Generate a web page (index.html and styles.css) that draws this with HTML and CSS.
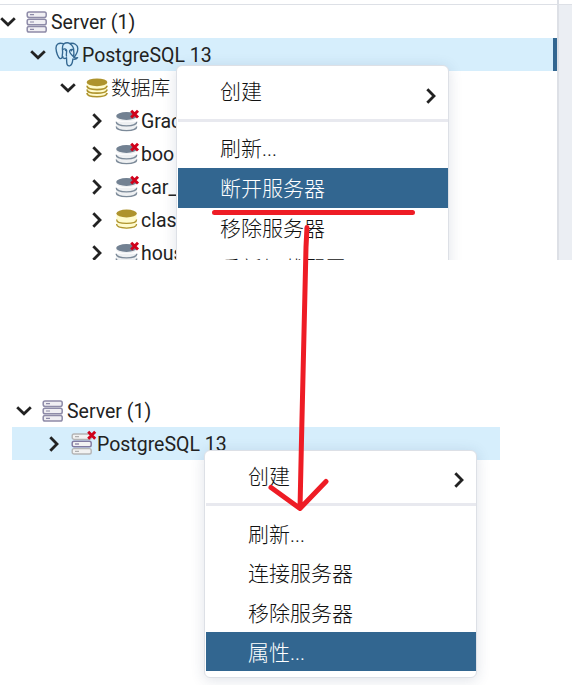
FILE: index.html
```html
<!DOCTYPE html>
<html lang="zh-CN">
<head>
<meta charset="utf-8">
<title>Server</title>
<link rel="stylesheet" href="styles.css">
</head>
<body>
<svg class="defs" width="0" height="0">
  <defs>
    <symbol id="down" viewBox="0 0 16 10"><path d="M1.2 1.3 8 7.8 14.8 1.3" fill="none" stroke="#222" stroke-width="2.8"/></symbol>
    <symbol id="right" viewBox="0 0 10 16"><path d="M1.3 1.2 8 8 1.3 14.8" fill="none" stroke="#222" stroke-width="2.8"/></symbol>
    <symbol id="servers" viewBox="0 0 22 22">
      <g fill="#f0eff3" stroke="#8e8ba8" stroke-width="1.5">
        <rect x="1.2" y=".9" width="19" height="5.5" rx="1.8"/><rect x="1.2" y="8.2" width="19" height="5.5" rx="1.8"/><rect x="1.2" y="15.5" width="19" height="5.5" rx="1.8"/>
      </g>
      <path d="M4 3.7h4M4 11h4M4 18.3h4" stroke="#8e8ba8" stroke-width="1.2"/>
    </symbol>
    <symbol id="servers-off" viewBox="0 0 26 25">
      <g fill="#f2f2f2" stroke="#b5b5b5" stroke-width="1.4">
        <rect x="1.2" y="4" width="19" height="5.4" rx="1.8"/><rect x="1.2" y="18.6" width="19" height="5.4" rx="1.8"/>
        <rect x="1.2" y="11.3" width="19" height="5.4" rx="1.8" stroke="#8079a0"/>
      </g>
      <path d="M4 6.7h4M4 21.3h4" stroke="#b0b0b0" stroke-width="1.2"/><path d="M4 14h4" stroke="#8079a0" stroke-width="1.2"/>
      <path d="m17.2 1.7 7 7m0-7-7 7" stroke="#d0021b" stroke-width="2.9"/>
    </symbol>
    <symbol id="db-off" viewBox="0 0 25 24">
      <g fill="#eef0f2" stroke="#7c8a99" stroke-width="1.3">
        <path d="M1.2 13.8v4.2c0 5 20.6 5 20.6 0v-4.2" stroke="none"/>
        <path d="M1.2 17.5c0 5.4 20.6 5.4 20.6 0"/><path d="M1.2 12.8c0 5.4 20.6 5.4 20.6 0"/>
        <path d="M1.2 6.5v2c0 5 20.6 5 20.6 0v-2" stroke="none"/>
      </g>
      <ellipse cx="11.5" cy="7" rx="10.3" ry="3.9" fill="#728192"/>
      <path d="m16.2 1.7 6.8 6.8m0-6.8-6.8 6.8" stroke="#d0021b" stroke-width="2.9"/>
    </symbol>
    <symbol id="db-on" viewBox="0 0 25 24">
      <g fill="#fffbcd" stroke="#ae932d" stroke-width="1.3">
        <path d="M1.6 6v11c0 5 20 5 20 0V6" stroke="none"/>
        <path d="M1.6 16.1c0 5.3 20 5.3 20 0"/><path d="M1.6 11.4c0 5.3 20 5.3 20 0"/>
      </g>
      <ellipse cx="11.6" cy="5.5" rx="10.2" ry="3.9" fill="#ae932d"/>
    </symbol>
    <symbol id="databases" viewBox="0 0 22 20">
      <g fill="#fffbcd" stroke="#ae932d" stroke-width="1.7">
        <path d="M1 5v10.5c0 4.6 20 4.6 20 0V5" stroke="none"/>
        <path d="M1 15c0 5 20 5 20 0"/><path d="M1 11.4c0 5 20 5 20 0"/><path d="M1 7.8c0 5 20 5 20 0"/>
      </g>
      <ellipse cx="11" cy="4.3" rx="10.4" ry="3.9" fill="#ae932d"/>
    </symbol>
    <symbol id="elephant" viewBox="0 0 24 25">
      <g fill="none" stroke="#336791" stroke-width="1.35" stroke-linecap="round" stroke-linejoin="round">
        <path d="M8.2 1.6C3.5.3.8 2.4 1 6.5c.2 4 2.2 9.1 4.1 10.1 1 .5 1.8-.8 2.8-1.9"/>
        <path d="M8.5 2.1c2-1.4 4.9-1.4 6.5-.6 4-.9 7.7 1.2 7.8 4.9 0 3.7-2.2 7-4 9.1 1.6.6 2.8.4 3.8.2-1.4 1.8-3.5 1.8-4.7 1.3-.4 3.1-.6 6.4-3.2 6.8-2.4.3-2.9-1.4-3-3.8l-.2-4.4c-1.4 1.6-3.4.9-4.1-.6-.5-1.3.3-3 .2-5C7.6 7 6.7 4.4 8.5 2.1Z"/>
        <path d="M7.6 7.5c1.4-1 3.7-.9 4 .9.3 2.2-.7 3.8-.1 5.7"/>
        <path d="M15 1.8c2.4 1.3 3.9 4.4 3.7 6.2-.2 2.2 1 4-.4 6.4-1.6-1.4-3.6-3.2-3.7-5.2 0-1.6 1.8-2.2 3.8-1.7M10.5 7.9v.7m6-.4v.6"/>
      </g>
    </symbol>
  </defs>
</svg>

<section class="panel">
  <div class="tree">
    <div class="row l0"><svg class="chev"><use href="#down"/></svg><svg class="ic srv"><use href="#servers"/></svg><span>Server (1)</span></div>
    <div class="row l1 selected"><svg class="chev"><use href="#down"/></svg><svg class="ic pg"><use href="#elephant"/></svg><span>PostgreSQL 13</span></div>
    <div class="row l2"><svg class="chev"><use href="#down"/></svg><svg class="ic dbs"><use href="#databases"/></svg><span class="cjk">数据库</span></div>
    <div class="row l3"><svg class="chev r"><use href="#right"/></svg><svg class="ic db"><use href="#db-off"/></svg><span>Grac</span></div>
    <div class="row l3"><svg class="chev r"><use href="#right"/></svg><svg class="ic db"><use href="#db-off"/></svg><span>boo</span></div>
    <div class="row l3"><svg class="chev r"><use href="#right"/></svg><svg class="ic db"><use href="#db-off"/></svg><span>car_</span></div>
    <div class="row l3"><svg class="chev r"><use href="#right"/></svg><svg class="ic db"><use href="#db-on"/></svg><span>clas</span></div>
    <div class="row l3"><svg class="chev r"><use href="#right"/></svg><svg class="ic db"><use href="#db-off"/></svg><span>hous</span></div>
  </div>
  <div class="splitter"></div>
  <div class="side"></div>
  <div class="menu menu-top">
    <div class="item first"><span>创建</span><svg class="chev r"><use href="#right"/></svg></div>
    <div class="divider"></div>
    <div class="item">刷新...</div>
    <div class="item active">断开服务器</div>
    <div class="item">移除服务器</div>
    <div class="item">重新加载配置</div>
  </div>
</section>

<section class="lower">
  <div class="row l0"><svg class="chev"><use href="#down"/></svg><svg class="ic srv"><use href="#servers"/></svg><span>Server (1)</span></div>
  <div class="row l1 selected"><svg class="chev r"><use href="#right"/></svg><svg class="ic off"><use href="#servers-off"/></svg><span>PostgreSQL 13</span></div>
</section>
<div class="menu menu-bottom">
  <div class="item first"><span>创建</span><svg class="chev r"><use href="#right"/></svg></div>
  <div class="divider"></div>
  <div class="item">刷新...</div>
  <div class="item">连接服务器</div>
  <div class="item">移除服务器</div>
  <div class="item active">属性...</div>
</div>

<svg class="marks" viewBox="0 0 584 685">
  <path d="M214.5 212.5H412.5M307 227.5 306 247 301.5 440 300 508.5M271 487.5 300 508.5 326 481.5"/>
</svg>
</body>
</html>
```
FILE: styles.css
```css
* { box-sizing: border-box; }
body {
  margin: 0;
  width: 584px;
  height: 685px;
  position: relative;
  overflow: hidden;
  background: #fff;
  color: #222;
  font-family: Roboto, "Noto Sans CJK SC", sans-serif;
  font-size: 19.5px;
}
.defs { position: absolute; }
.panel {
  position: relative;
  display: flex;
  width: 572px;
  height: 260px;
  overflow: hidden;
}
.tree {
  width: 557px;
  margin-top: 4px;
  border-top: 1px solid #dde0e6;
}
.row {
  display: flex;
  align-items: center;
  height: 33px;
  white-space: nowrap;
}
.row span { line-height: 33px; padding-top: 2px; }
.row .cjk { font-weight: 300; font-size: 19.8px; color: #111; }
.chev { width: 16px; height: 10px; flex: none; }
.chev.r { width: 10px; height: 16px; margin: 0 3px; }
.ic { flex: none; }
.srv { width: 22px; height: 22px; margin: 0 3px 0 10px; }
.pg { width: 24px; height: 25px; margin: 0 3px 0 9px; }
.dbs { width: 22px; height: 20px; margin: 0 3px 0 10px; }
.db { width: 25px; height: 24px; margin: 0 1px 0 10px; }
.off { width: 26px; height: 25px; margin: 0 0 2px 9px; }
.l0 { padding-left: 0; }
.l1 { padding-left: 30px; }
.l2 { padding-left: 60px; }
.l3 { padding-left: 89px; }
.selected { background: #d6eefc; }
.tree .selected { border-right: 4px solid #326690; }
.splitter { width: 2px; background: #dde0e6; }
.side {
  width: 13px;
  margin-top: 4px;
  border-top: 1px solid #dde0e6;
  background: #ebeef3;
}
.lower { width: 500px; margin-top: 134px; padding-left: 12px; }
.lower .l0 { padding-left: 4px; }
.lower .l1 { padding-left: 34px; }
.menu {
  position: absolute;
  width: 273px;
  padding-left: 1px;
  border: 1px solid #dde0e6;
  border-radius: 6px;
  background: #fff;
  box-shadow: 0 2px 14px rgba(40, 60, 100, .15);
  color: #111;
  font-size: 21px;
  font-weight: 300;
}
.menu-top { left: 176px; top: 65px; height: 240px; }
.menu-bottom { left: 204px; top: 450px; height: 228px; }
.item {
  height: 40px;
  padding-left: 42px;
  line-height: 42px;
  white-space: nowrap;
}
.menu-bottom .item { height: 39.3px; line-height: 42px; }
.menu .first,
.menu-bottom .first {
  display: flex;
  align-items: center;
  justify-content: space-between;
  height: 53px;
  padding-right: 9px;
}
.menu-bottom .first { height: 52px; }
.menu .first span { line-height: 40px; margin-top: -2px; }
.menu-bottom .first span { margin-top: 0; }
.first .chev { margin-top: 6px; }
.menu-bottom .first .chev { margin-top: 5px; }
.divider { height: 3px; margin-bottom: 6px; background: #e8e9ef; }
.menu-bottom .divider { margin-bottom: 8px; }
.menu .active { background: #326690; color: #fff; }
.marks {
  position: absolute;
  left: 0;
  top: 0;
  width: 584px;
  height: 685px;
  fill: none;
  stroke: #ee1c25;
  stroke-width: 5;
  stroke-linecap: round;
  stroke-linejoin: round;
}
```
